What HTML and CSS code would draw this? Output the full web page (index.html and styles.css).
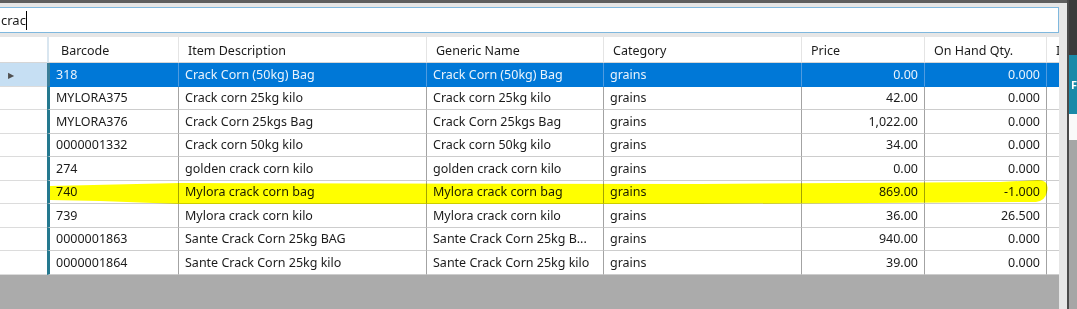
FILE: index.html
```html
<!DOCTYPE html>
<html lang="en">
<head>
  <meta charset="UTF-8" />
  <title>Item Lookup</title>
  <link rel="stylesheet" href="styles.css">
</head>
<body>

<div class="window">
  <div class="main">
    <div class="topbar"></div>

    <div class="search">
      <span class="typed">crac</span><span class="caret"></span>
    </div>

    <div class="grid">
      <div class="row head">
        <div class="rh"></div>
        <div class="c first">Barcode</div>
        <div class="c">Item Description</div>
        <div class="c">Generic Name</div>
        <div class="c">Category</div>
        <div class="c">Price</div>
        <div class="c">On Hand Qty.</div>
        <div class="c more">I</div>
      </div>

      <div class="row selected">
        <div class="rh">&#9654;</div>
        <div class="c first">318</div>
        <div class="c">Crack Corn (50kg) Bag</div>
        <div class="c">Crack Corn (50kg) Bag</div>
        <div class="c">grains</div>
        <div class="c num">0.00</div>
        <div class="c num">0.000</div>
        <div class="c more"></div>
      </div>

      <div class="row">
        <div class="rh"></div>
        <div class="c first">MYLORA375</div>
        <div class="c">Crack corn 25kg kilo</div>
        <div class="c">Crack corn 25kg kilo</div>
        <div class="c">grains</div>
        <div class="c num">42.00</div>
        <div class="c num">0.000</div>
        <div class="c more"></div>
      </div>

      <div class="row">
        <div class="rh"></div>
        <div class="c first">MYLORA376</div>
        <div class="c">Crack Corn 25kgs Bag</div>
        <div class="c">Crack Corn 25kgs Bag</div>
        <div class="c">grains</div>
        <div class="c num">1,022.00</div>
        <div class="c num">0.000</div>
        <div class="c more"></div>
      </div>

      <div class="row">
        <div class="rh"></div>
        <div class="c first">0000001332</div>
        <div class="c">Crack corn 50kg kilo</div>
        <div class="c">Crack corn 50kg kilo</div>
        <div class="c">grains</div>
        <div class="c num">34.00</div>
        <div class="c num">0.000</div>
        <div class="c more"></div>
      </div>

      <div class="row">
        <div class="rh"></div>
        <div class="c first">274</div>
        <div class="c">golden crack corn kilo</div>
        <div class="c">golden crack corn kilo</div>
        <div class="c">grains</div>
        <div class="c num">0.00</div>
        <div class="c num">0.000</div>
        <div class="c more"></div>
      </div>

      <div class="row">
        <div class="rh"></div>
        <div class="c first">740</div>
        <div class="c">Mylora crack corn bag</div>
        <div class="c">Mylora crack corn bag</div>
        <div class="c">grains</div>
        <div class="c num">869.00</div>
        <div class="c num">-1.000</div>
        <div class="c more"></div>
      </div>

      <div class="row">
        <div class="rh"></div>
        <div class="c first">739</div>
        <div class="c">Mylora crack corn kilo</div>
        <div class="c">Mylora crack corn kilo</div>
        <div class="c">grains</div>
        <div class="c num">36.00</div>
        <div class="c num">26.500</div>
        <div class="c more"></div>
      </div>

      <div class="row">
        <div class="rh"></div>
        <div class="c first">0000001863</div>
        <div class="c">Sante Crack Corn 25kg BAG</div>
        <div class="c">Sante Crack Corn 25kg B...</div>
        <div class="c">grains</div>
        <div class="c num">940.00</div>
        <div class="c num">0.000</div>
        <div class="c more"></div>
      </div>

      <div class="row">
        <div class="rh"></div>
        <div class="c first">0000001864</div>
        <div class="c">Sante Crack Corn 25kg kilo</div>
        <div class="c">Sante Crack Corn 25kg kilo</div>
        <div class="c">grains</div>
        <div class="c num">39.00</div>
        <div class="c num">0.000</div>
        <div class="c more"></div>
      </div>

      <!-- marker stroke drawn over the 740 row -->
      <svg class="marker" width="1059" height="238" viewBox="0 37 1059 238">
        <path d="M50 186 L180 183 L700 184 L1000 182 L1038 180 Q1050 180 1047 192 Q1045 201 1036 202 L700 204 L180 204 L100 201 L50 200 Z" fill="#ffff00"/>
      </svg>
    </div>

    <div class="empty"></div>
  </div>

  <div class="side">
    <div class="side-dark"></div>
    <div class="side-teal">F</div>
    <div class="side-white"></div>
    <div class="side-gray"></div>
  </div>
</div>

</body>
</html>
```

FILE: styles.css
```css
body {
  margin: 0;
  font-family: "Noto Sans", sans-serif;
  font-size: 12.5px;
  color: #1b1b1b;
  background: #e6e6e6;
  overflow: hidden;
}

.window {
  display: flex;
  width: 1077px;
  height: 309px;
}

.main {
  width: 1067px;
  display: flex;
  flex-direction: column;
  background: #e6e6e6;
  border-right: 2px solid #4a4a4a;
}

.topbar {
  height: 3px;
  background: #5e5e5e;
}

.search {
  height: 26px;
  width: 1061px;
  margin: 4px 0 0 -2px;
  box-sizing: border-box;
  background: #fff;
  border: 1px solid #7fb8de;
  display: flex;
  align-items: center;
  padding-left: 2px;
  font-size: 13px;
}

.caret {
  width: 1px;
  height: 19px;
  background: #000;
}

.grid {
  position: relative;
  width: 1059px;
  margin-top: 4px;
  background: #fff;
}

.row {
  display: grid;
  grid-template-columns: 47px 132px 248px 177px 198px 123px 122px 12px;
  height: 23.5px;
}

.row .c,
.row .rh {
  box-sizing: border-box;
  border-bottom: 1px solid #cdcdcd;
  border-right: 1px solid #a3a3a3;
  padding-left: 6px;
  display: flex;
  align-items: center;
  white-space: nowrap;
  overflow: hidden;
}

.row .rh {
  border-right: none;
  border-bottom-color: #dcdcdc;
  color: #505050;
  font-size: 8px;
  padding-left: 8px;
}

.row .first {
  border-left: 3px solid #25798f;
  padding-left: 6px;
}

.row .num {
  justify-content: flex-end;
  padding-right: 6px;
}

.row .more {
  border-right: none;
}

.head {
  height: 26px;
}

.head .c,
.head .rh {
  border-right-color: #e4e4e4;
  border-bottom-color: #d6d6d6;
  padding-left: 9px;
  padding-top: 1px;
}

.head .first {
  border-left: 2px solid #d9e6f0;
  padding-left: 12px;
}

.head .more {
  padding-left: 9px;
  color: #222;
}

.selected .c {
  background: #0078d7;
  color: #e9f3fc;
  border-right-color: #4f9be0;
  border-bottom-color: #0078d7;
}

.selected .rh {
  background: #c6dff3;
}

.selected .first {
  border-left-color: #3a7e98;
}

.marker {
  position: absolute;
  left: 0;
  top: 0;
  mix-blend-mode: multiply;
  pointer-events: none;
}

.empty {
  flex: 1;
  width: 1059px;
  background: #ababab;
}

.side {
  width: 8px;
  display: flex;
  flex-direction: column;
}

.side-dark {
  height: 55px;
  background: #3b3b3b;
}

.side-teal {
  height: 59px;
  background: #1a8aa8;
  color: #fff;
  font-size: 11px;
  font-weight: bold;
  display: flex;
  align-items: center;
  padding-left: 2px;
}

.side-white {
  height: 26px;
  background: #fafafa;
}

.side-gray {
  flex: 1;
  background: #a6a6a6;
}
```
